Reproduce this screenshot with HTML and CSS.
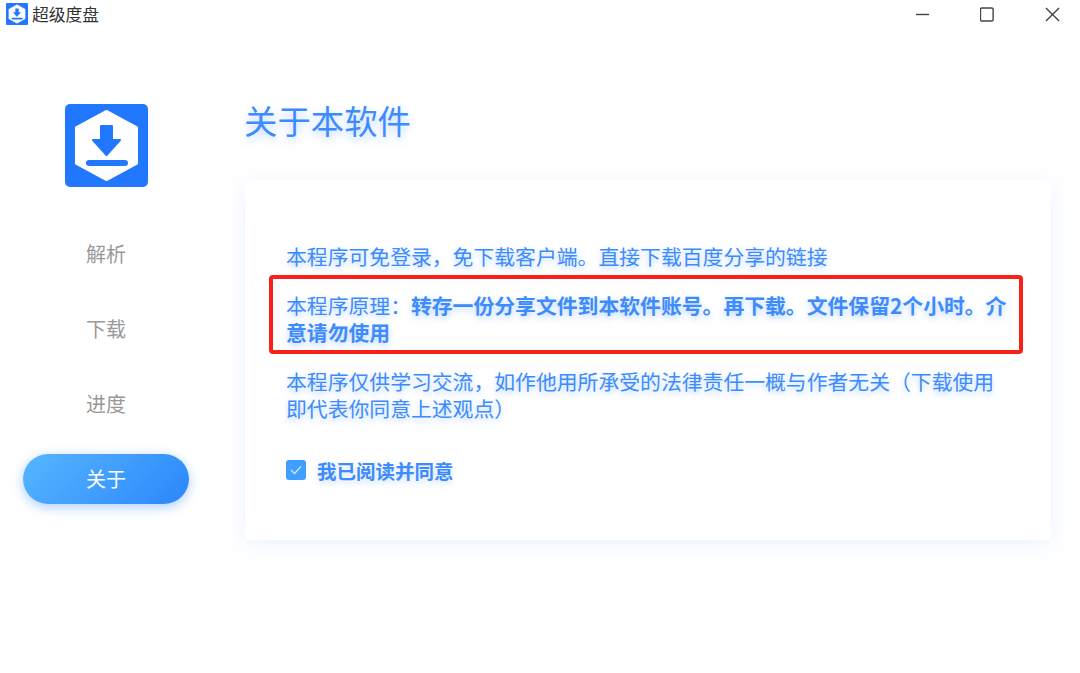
FILE: index.html
```html
<!DOCTYPE html>
<html lang="zh-CN">
<head>
  <meta charset="UTF-8">
  <meta name="viewport" content="width=device-width, initial-scale=1.0">
  <title>超级度盘</title>
  <link rel="stylesheet" href="styles.css">
</head>
<body>
  <div class="titlebar">
    <div class="app-name">
      <svg class="app-icon" viewBox="0 0 83 83">
        <rect width="83" height="83" rx="5" fill="#2277ff"/>
        <path d="M41.500 7L72 23.500V59.500L41.500 76L11 59.500V23.500Z" fill="#fff" stroke="#fff" stroke-width="2" stroke-linejoin="round"/>
        <path d="M36 22H47V36H55L41.500 51L28 36H36Z" fill="#2277ff" stroke="#2277ff" stroke-width="2" stroke-linejoin="round"/>
        <rect x="21" y="56" width="42" height="6" rx="3" fill="#2277ff"/>
      </svg>
      <span>超级度盘</span>
    </div>
    <div class="window-btns">
      <svg viewBox="0 0 16 16"><path d="M1 8H15" /></svg>
      <svg viewBox="0 0 16 16"><rect x="0.500" y="1" width="13.500" height="14" rx="1.500"/></svg>
      <svg viewBox="0 0 16 16"><path d="M1 1L15 15M15 1L1 15"/></svg>
    </div>
  </div>

  <div class="main">
    <div class="sidebar">
      <svg class="logo" viewBox="0 0 83 83">
        <rect width="83" height="83" rx="5" fill="#2277ff"/>
        <path d="M41.500 7L72 23.500V59.500L41.500 76L11 59.500V23.500Z" fill="#fff" stroke="#fff" stroke-width="2" stroke-linejoin="round"/>
        <path d="M36 22H47V36H55L41.500 51L28 36H36Z" fill="#2277ff" stroke="#2277ff" stroke-width="2" stroke-linejoin="round"/>
        <rect x="21" y="56" width="42" height="6" rx="3" fill="#2277ff"/>
      </svg>
      <div class="nav">
        <div class="nav-item">解析</div>
        <div class="nav-item">下载</div>
        <div class="nav-item">进度</div>
        <div class="nav-item active">关于</div>
      </div>
    </div>

    <div class="content">
      <h1>关于本软件</h1>
      <div class="card">
        <p>本程序可免登录，免下载客户端。直接下载百度分享的链接</p>
        <p class="marked">本程序原理：<b>转存一份分享文件到本软件账号。再下载。文件保留2个小时。介意请勿使用</b></p>
        <p>本程序仅供学习交流，如作他用所承受的法律责任一概与作者无关（下载使用即代表你同意上述观点）</p>
        <label class="agree">
          <span class="checkbox">
            <svg viewBox="0 0 20 20"><path d="M5 10L8.500 13.500L15 6.500"/></svg>
          </span>
          <span>我已阅读并同意</span>
        </label>
      </div>
    </div>
  </div>
</body>
</html>
```

FILE: styles.css
```css
body {
  font-family: "Noto Sans CJK SC", "Liberation Sans", sans-serif;
  background-color: #fff;
  margin: 0;
  padding: 0;
  height: 673px;
  overflow: hidden;
}

.titlebar {
  display: flex;
  justify-content: space-between;
  align-items: center;
  height: 28px;
  padding: 0 20px 0 6px;
}

.app-name {
  display: flex;
  align-items: center;
  gap: 4px;
  font-size: 16.750px;
  color: #333;
}

.app-icon {
  width: 22px;
  height: 22px;
}

.window-btns {
  display: flex;
  gap: 50px;
}

.window-btns svg {
  width: 15px;
  height: 15px;
  fill: none;
  stroke: #444;
  stroke-width: 1.500;
}

.main {
  display: flex;
}

.sidebar {
  display: flex;
  flex-direction: column;
  align-items: center;
  width: 212px;
  flex: none;
}

.logo {
  width: 83px;
  height: 83px;
  margin-top: 76px;
}

.nav {
  display: flex;
  flex-direction: column;
  gap: 25px;
  margin-top: 42px;
}

.nav-item {
  width: 166px;
  height: 50px;
  line-height: 50px;
  text-align: center;
  font-size: 20px;
  color: #999;
  border-radius: 25px;
}

.nav-item.active {
  color: #fff;
  background: linear-gradient(135deg, #56b6ff, #2b86fb);
  box-shadow: 0 3px 12px rgba(50, 130, 250, 0.4);
}

.content {
  width: 806px;
  margin-left: 33px;
}

h1 {
  margin: 69px 0 0 -1px;
  height: 83px;
  line-height: 46px;
  font-size: 33.400px;
  font-weight: 400;
  color: #3d8bfd;
  text-shadow: 0 4px 8px rgba(60, 140, 255, 0.35);
}

.card {
  height: 360px;
  box-sizing: border-box;
  padding: 63px 42px 0 41px;
  background-color: #fff;
  border-radius: 6px;
  box-shadow: 0 4px 22px rgba(80, 140, 250, 0.12);
  color: #3d8bfd;
  font-size: 20.840px;
  line-height: 27.500px;
}

.card p {
  margin: 0 0 21px;
  text-shadow: 0 3px 6px rgba(60, 140, 255, 0.35);
}

.marked {
  position: relative;
}

/* red annotation box drawn over the paragraph */
.marked::after {
  content: "";
  position: absolute;
  left: -17px;
  right: -14px;
  top: -17px;
  bottom: -7px;
  border: 4px solid #f8211a;
  border-radius: 4px;
}

.agree {
  display: flex;
  align-items: center;
  gap: 11px;
  margin-top: 34px;
  font-size: 19.500px;
  font-weight: 700;
  text-shadow: 0 3px 6px rgba(60, 140, 255, 0.25);
}

.checkbox {
  display: flex;
  width: 20px;
  height: 20px;
  background-color: #409eff;
  border-radius: 3px;
}

.checkbox path {
  fill: none;
  stroke: #cfe5ff;
  stroke-width: 1.300;
}
```
